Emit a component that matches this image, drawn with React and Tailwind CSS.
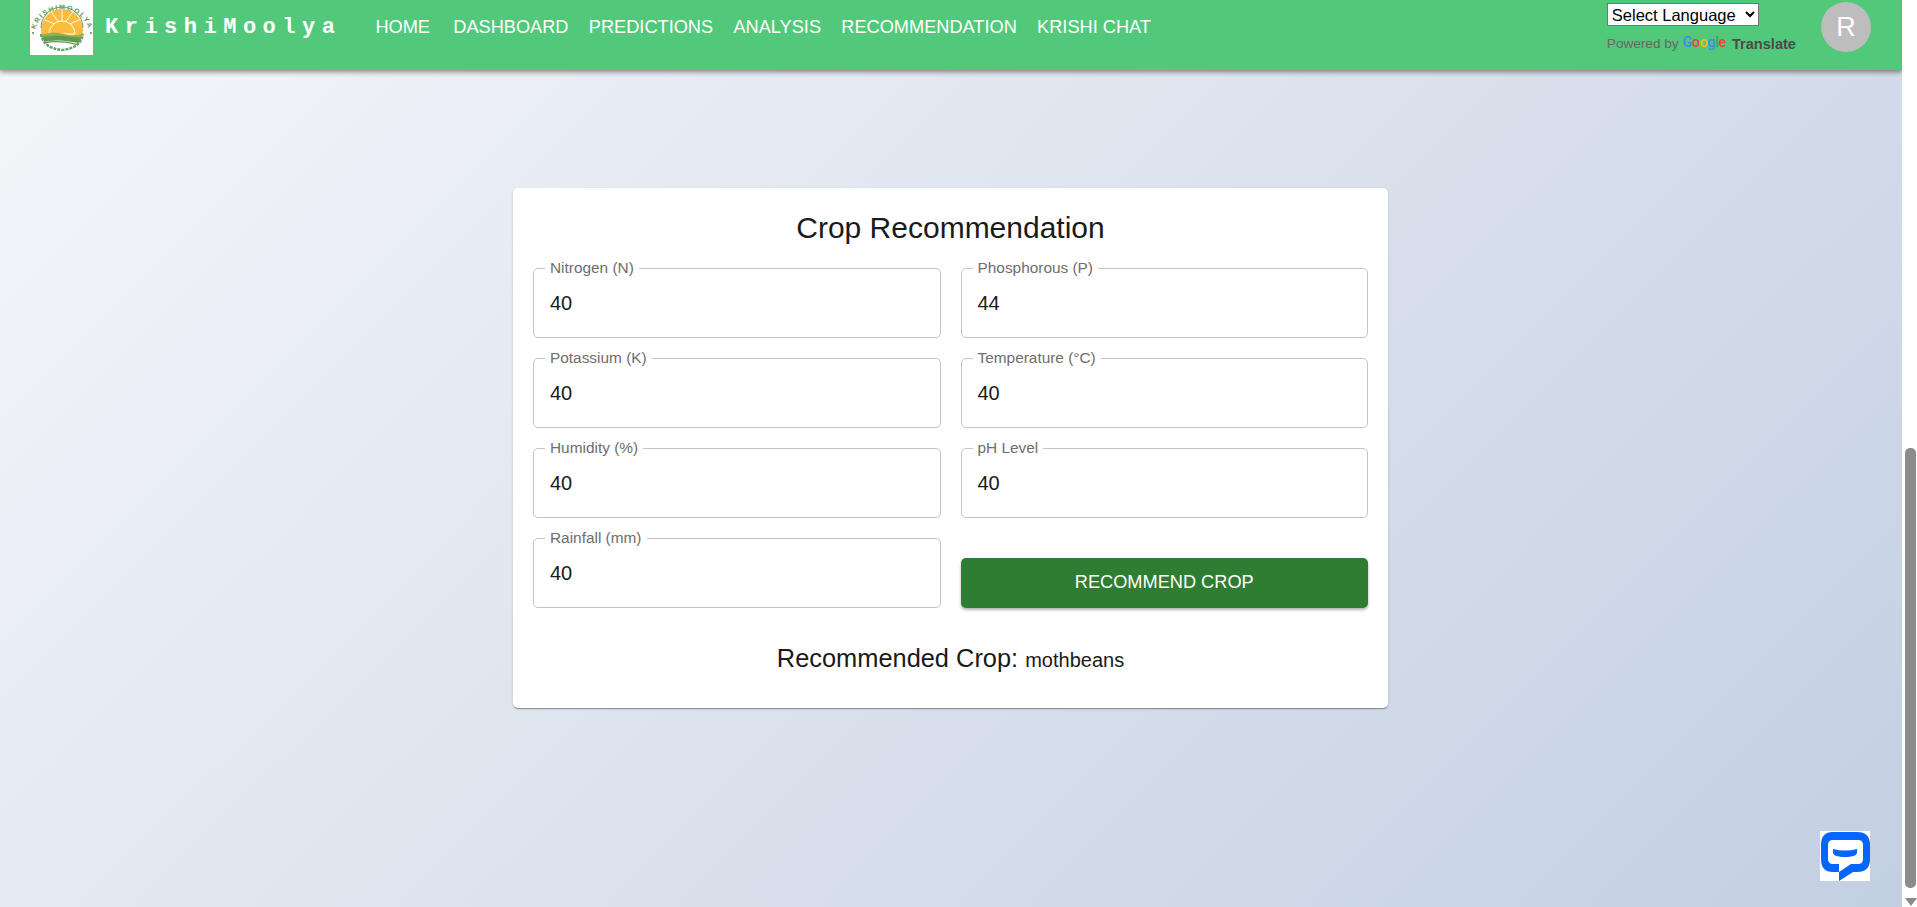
const FONT = "font-['Liberation_Sans',Arial,sans-serif]";

function Logo() {
  return (
    <div className="w-[63px] h-[55px] bg-white shrink-0">
      <svg width="63" height="55" viewBox="0 0 63 55">
        <defs>
          <path id="logoArc" d="M4.5 37 A27.5 27.5 0 0 1 59.5 37" fill="none" />
          <clipPath id="sunClip"><circle cx="32" cy="30" r="21" /></clipPath>
        </defs>
        <text fontSize="7" fontWeight="700" fill="#5f9a5a" letterSpacing="1.5" fontFamily="Liberation Sans, sans-serif">
          <textPath href="#logoArc" startOffset="50%" textAnchor="middle">KRISHIMOOLYA</textPath>
        </text>
        <circle cx="3" cy="33" r="1" fill="#5f8a5a" />
        <circle cx="61" cy="33" r="1" fill="#5f8a5a" />
        <g clipPath="url(#sunClip)">
          <rect x="10" y="9" width="44" height="27" fill="#fdbb3f" />
          <g stroke="#fff" strokeWidth="0.9">
            <path d="M32 27 L32 8 M32 27 L20 10 M32 27 L44 10 M32 27 L10 18 M32 27 L54 18" />
          </g>
          <path d="M19 34 A13 13 0 0 1 45 34 Z" fill="#fdbb3f" stroke="#fff" strokeWidth="1" />
          <path d="M9 36 Q22 30 34 34 T55 32 V41 H9 Z" fill="#93b04c" />
          <path d="M9 38 Q26 33 55 39 V45 H9 Z" fill="#5f9a50" />
          <path d="M12 42 Q30 38 52 44 V52 H12 Z" fill="#fff" />
          <path d="M15 42.5 Q32 40 49 45" stroke="#5d9457" strokeWidth="1.3" fill="none" />
        </g>
        <path d="M11 28 A21 21 0 0 1 53 28" fill="none" stroke="#6f9d68" strokeWidth="1" />
        <path d="M11 34 Q13 48 32 50 Q51 48 53 34" fill="none" stroke="#6f9d68" strokeWidth="2.4" strokeDasharray="3 1" />
      </svg>
    </div>
  );
}

function ChatIcon() {
  return (
    <svg width="50" height="50" viewBox="0 0 50 50" className="absolute left-[1820px] top-[831px] bg-white">
      <path
        fillRule="evenodd"
        fill="#0566ff"
        d="M13 1 H37 Q50 1 50 14 V28 Q50 41 37 41 H33 L19 50 V41 H13 Q1 41 1 28 V14 Q1 1 13 1 Z M13 9 Q8 9 8 14 V28 Q8 33 13 33 H19 V41 L31 33 H38 Q43 33 43 28 V14 Q43 9 38 9 Z"
      />
      <path fill="#0566ff" d="M13 18 Q25 21 37 18 V22 Q36 25 31 25.5 Q25 26.5 19 25.5 Q14 25 13 22 Z" />
    </svg>
  );
}

function Field({ label, value }) {
  return (
    <fieldset className="min-w-0 h-[79px] border border-[#c4c4c4] rounded-[5px] px-[16px] pb-0">
      <legend className="ml-[-5px] px-[5px] text-[15.4px] leading-[18px] text-[#6e6e6e]">{label}</legend>
      <div className="text-[20px] leading-[24px] text-[#1a1a1a] pt-[14px]">{value}</div>
    </fieldset>
  );
}

const NAV = ["DASHBOARD", "PREDICTIONS", "ANALYSIS", "RECOMMENDATION", "KRISHI CHAT"];

export default function App() {
  return (
    <div className={`${FONT} relative flex w-full h-[907px] overflow-hidden`}>
      <div className="flex-1 min-w-0 flex flex-col bg-[linear-gradient(135deg,#f5f7fa_0%,#c3cfe2_100%)]">
        <header className="h-[70px] shrink-0 bg-[#52c97a] shadow-[0_2px_5px_rgba(0,0,0,0.45)] flex items-start pl-[30px] pr-[31px]">
          <Logo />
          <div className="ml-[12px] mt-[15px] font-['Liberation_Mono',monospace] font-bold text-[22px] leading-[26px] tracking-[6.5px] text-white whitespace-nowrap">
            KrishiMoolya
          </div>
          <nav className="ml-[34px] mt-[16px] flex gap-[20.3px] text-[18.2px] leading-[22px] text-white whitespace-nowrap">
            <span className="mr-[3px]">HOME</span>
            {NAV.map((n) => (
              <span key={n}>{n}</span>
            ))}
          </nav>
          <div className="ml-auto mt-[3px] flex flex-col items-start">
            <select className="w-[152px] h-[23px] bg-white border border-[#767676] text-[16.5px] text-black" defaultValue="x">
              <option value="x">Select Language</option>
            </select>
            <div className="mt-[8px] flex items-center text-[13.6px] leading-[16px] text-[#666666] whitespace-nowrap">
              <span>Powered by</span>
              <span className="ml-[4px] mb-[3px] font-['Roboto',sans-serif] font-medium text-[14px] leading-[16px] tracking-[-0.2px]">
                <span className="text-[#4285f4]">G</span>
                <span className="text-[#ea4335]">o</span>
                <span className="text-[#fbbc05]">o</span>
                <span className="text-[#4285f4]">g</span>
                <span className="text-[#34a853]">l</span>
                <span className="text-[#ea4335]">e</span>
              </span>
              <span className="ml-[6px] font-bold text-[#4a4a4a] text-[14.6px]">Translate</span>
            </div>
          </div>
          <div className="ml-[25px] mt-[2px] w-[50px] h-[50px] rounded-full bg-[#bdbdbd] text-white text-[27px] flex items-center justify-center">
            R
          </div>
        </header>

        <main className="flex justify-center pt-[118px] pr-[1px]">
          <section className="w-[875px] h-[520px] bg-white rounded-[5px] shadow-[0_2px_1px_-1px_rgba(0,0,0,0.2),0_1px_1px_0_rgba(0,0,0,0.14),0_1px_3px_0_rgba(0,0,0,0.12)] px-[20px] pt-[20px] text-[#1a1a1a]">
            <h1 className="text-center text-[30px] leading-[40px]">Crop Recommendation</h1>
            <div className="mt-[11px] grid grid-cols-2 gap-x-[20px] gap-y-[11px]">
              <Field label="Nitrogen (N)" value="40" />
              <Field label="Phosphorous (P)" value="44" />
              <Field label="Potassium (K)" value="40" />
              <Field label="Temperature (°C)" value="40" />
              <Field label="Humidity (%)" value="40" />
              <Field label="pH Level" value="40" />
              <Field label="Rainfall (mm)" value="40" />
              <button className="self-end h-[50px] rounded-[5px] bg-[#2e7d32] text-white text-[18.2px] shadow-[0_2px_3px_rgba(0,0,0,0.3)]">
                RECOMMEND CROP
              </button>
            </div>
            <p className="mt-[34px] text-center text-[25.4px] leading-[32px]">
              Recommended Crop: <span className="text-[20px]">mothbeans</span>
            </p>
          </section>
        </main>
      </div>

      <aside className="w-[15px] shrink-0 bg-white flex flex-col items-center pl-[2px]">
        <div className="mt-[448px] w-[11px] h-[440px] rounded-[5px] bg-[#8b8b8b]" />
        <div className="mt-[10px] w-0 h-0 border-l-[6px] border-r-[6px] border-t-[8px] border-l-transparent border-r-transparent border-t-[#8b8b8b]" />
      </aside>

      <ChatIcon />
    </div>
  );
}
